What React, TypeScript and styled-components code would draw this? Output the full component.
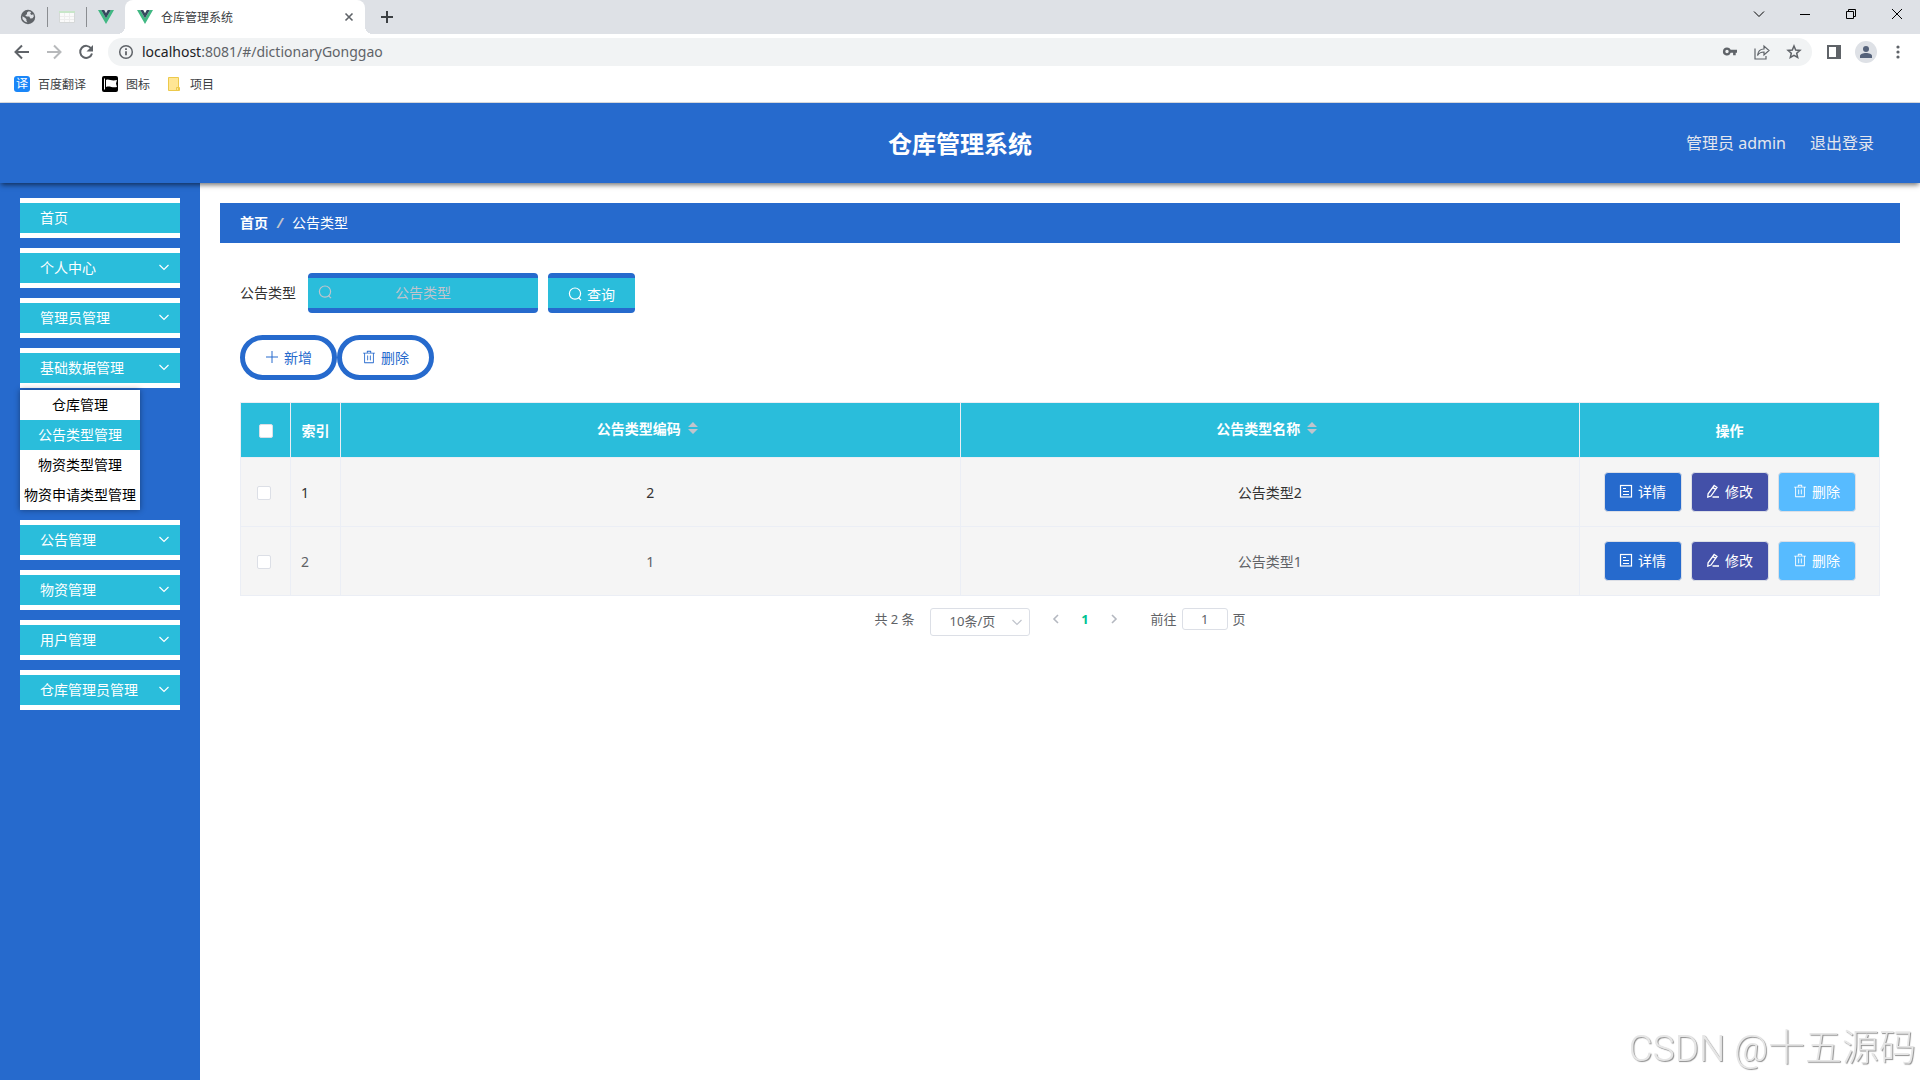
import React, { useState } from "react";
import styled, { createGlobalStyle, css } from "styled-components";

const BLUE = "#266acd";
const CYAN = "#2abddb";
const LINE = "#ebeef5";

const Global = createGlobalStyle`
  * { box-sizing: border-box; }
  body { margin: 0; background: #fff; }
  body, button, input, select {
    font-family: "Noto Sans", "Noto Sans CJK SC", sans-serif;
    font-size: 14px;
  }
  button { cursor: pointer; }
  svg { display: block; flex: none; }
`;

const Page = styled.div`
  display: flex;
  flex-direction: column;
  min-height: 100vh;
`;

/* ---------- browser chrome ---------- */

const TabStrip = styled.div`
  display: flex;
  height: 34px;
  padding-left: 9px;
  background: #dee1e6;
`;

const PinnedTab = styled.button<{ $divider?: boolean }>`
  display: flex;
  align-items: center;
  justify-content: center;
  width: ${(p) => (p.$divider ? 39 : 38)}px;
  height: 20px;
  margin-top: 7px;
  padding: 0;
  border: 0;
  border-right: ${(p) => (p.$divider ? "1px solid #8a8d91" : "0")};
  background: none;
`;

const ActiveTab = styled.div`
  position: relative;
  display: flex;
  align-items: center;
  gap: 8px;
  width: 240px;
  padding: 0 8px 0 12px;
  border-radius: 8px 8px 0 0;
  background: #fff;
  color: #3c4043;
  font-size: 12px;
  &::before,
  &::after {
    content: "";
    position: absolute;
    bottom: 0;
    width: 8px;
    height: 8px;
  }
  &::before {
    right: 100%;
    background: radial-gradient(circle at 0 0, transparent 8px, #fff 8px);
  }
  &::after {
    left: 100%;
    background: radial-gradient(circle at 100% 0, transparent 8px, #fff 8px);
  }
`;

const TabTitle = styled.span`
  flex: 1;
`;

const IconButton = styled.button<{ $width: number }>`
  display: flex;
  align-items: center;
  justify-content: center;
  width: ${(p) => p.$width}px;
  height: 28px;
  padding: 0;
  border: 0;
  background: none;
  color: #5f6368;
`;

const NewTab = styled(IconButton)`
  height: 34px;
  margin-left: 8px;
  color: #3c4043;
`;

const WindowButtons = styled.div`
  display: flex;
  margin-left: auto;
  & > button {
    color: #000;
  }
`;

const Toolbar = styled.div`
  display: flex;
  align-items: center;
  height: 36px;
  padding: 0 6px;
`;

const Omnibox = styled.div`
  display: flex;
  flex: 1;
  align-items: center;
  height: 28px;
  margin: 0 6px;
  padding: 0 2px 0 10px;
  border-radius: 14px;
  background: #f1f3f4;
  color: #5f6368;
`;

const Url = styled.span`
  flex: 1;
  margin-left: 8px;
  padding-bottom: 1px;
  font-family: "Noto Sans", sans-serif;
  font-size: 14px;
  b {
    color: #202124;
    font-weight: 400;
  }
`;

const Avatar = styled.span`
  display: flex;
  align-items: center;
  justify-content: center;
  width: 22px;
  height: 22px;
  border-radius: 50%;
  background: #dee1e6;
`;

const Bookmarks = styled.nav`
  display: flex;
  gap: 16px;
  height: 33px;
  padding: 0 14px 4px;
  border-bottom: 1px solid #dadce0;
`;

const Bookmark = styled.a`
  display: flex;
  align-items: center;
  gap: 8px;
  color: #3c4043;
  font-size: 12px;
  text-decoration: none;
`;

const TranslateBadge = styled.span`
  width: 16px;
  height: 16px;
  border-radius: 3px;
  background: #1a86f8;
  color: #fff;
  font-size: 12px;
  line-height: 16px;
  text-align: center;
`;

/* ---------- application ---------- */

const Header = styled.header`
  position: relative;
  z-index: 1;
  display: grid;
  grid-template-columns: 1fr auto 1fr;
  align-items: center;
  height: 80px;
  padding: 0 46px 2px;
  background: ${BLUE};
  box-shadow: 0 3px 5px -1px rgba(0, 0, 0, 0.55);
`;

const Title = styled.h1`
  grid-column: 2;
  margin: 0;
  color: #fff;
  font-size: 24px;
  font-weight: 700;
`;

const UserArea = styled.div`
  display: flex;
  justify-content: flex-end;
  gap: 24px;
  color: #e3e6ee;
  font-size: 16px;
`;

const LogoutLink = styled.a`
  color: inherit;
  text-decoration: none;
`;

const Body = styled.div`
  display: flex;
  flex: 1;
`;

const Sidebar = styled.nav`
  display: flex;
  flex: none;
  flex-direction: column;
  gap: 10px;
  width: 200px;
  padding: 15px 20px;
  background: ${BLUE};
`;

const MenuButton = styled.button`
  display: flex;
  align-items: center;
  justify-content: space-between;
  width: 100%;
  height: 40px;
  padding: 0 9px 2px 20px;
  border: solid #fff;
  border-width: 5px 0;
  background: ${CYAN};
  color: #fff;
`;

const SubMenuSlot = styled.div`
  margin-top: -10px;
`;

const SubMenu = styled.div`
  display: flex;
  flex-direction: column;
  width: 120px;
  margin-top: 2px;
  box-shadow: 0 0 6px rgba(0, 0, 0, 0.4);
`;

const SubLink = styled.a<{ $active: boolean }>`
  height: 30px;
  background: ${(p) => (p.$active ? CYAN : "#fff")};
  color: ${(p) => (p.$active ? "#fff" : "#000")};
  line-height: 30px;
  text-align: center;
  text-decoration: none;
  white-space: nowrap;
`;

const Main = styled.main`
  flex: 1;
  min-width: 0;
  padding: 20px;
`;

const Breadcrumb = styled.nav`
  display: flex;
  align-items: center;
  gap: 9px;
  height: 40px;
  padding: 0 20px 2px;
  background: ${BLUE};
  color: #fff;
  a {
    color: inherit;
    font-weight: 700;
    text-decoration: none;
  }
`;

const Separator = styled.span`
  color: #c0c4cc;
  font-style: italic;
  font-weight: 700;
`;

const Content = styled.div`
  display: flex;
  flex-direction: column;
  gap: 22px;
  padding: 30px 20px;
`;

const SearchForm = styled.form`
  display: flex;
  align-items: center;
  gap: 10px;
`;

const FieldLabel = styled.label`
  margin-right: 2px;
  padding-bottom: 2px;
  color: #333;
`;

const framed = css`
  height: 40px;
  border: solid ${BLUE};
  border-width: 5px 0;
  border-radius: 4px;
  background: ${CYAN};
`;

const SearchBox = styled.div`
  ${framed}
  display: flex;
  align-items: center;
  width: 230px;
  padding: 0 24px 2px 10px;
  color: #c0c4cc;
`;

const SearchInput = styled.input`
  flex: 1;
  min-width: 0;
  padding: 0;
  border: 0;
  outline: 0;
  background: none;
  color: #fff;
  text-align: center;
  &::placeholder {
    color: #c0c4cc;
  }
`;

const ActionButton = styled.button`
  display: flex;
  align-items: center;
  justify-content: center;
  gap: 5px;
`;

const QueryButton = styled(ActionButton)`
  ${framed}
  padding: 2px 20px 0;
  color: #fff;
`;

const PillButton = styled(ActionButton)`
  height: 45px;
  padding: 0 20px 2px;
  border: 5px solid ${BLUE};
  border-radius: 23px;
  background: #fff;
  color: ${BLUE};
`;

const RowButton = styled(ActionButton)<{ $color: string }>`
  width: 78px;
  height: 40px;
  padding: 0 0 2px;
  border: 1px solid #dcdfe6;
  border-radius: 4px;
  background: ${(p) => p.$color};
  color: #fff;
`;

const ButtonRow = styled.div`
  display: flex;
`;

const RowActions = styled.div`
  display: flex;
  justify-content: center;
  gap: 9px;
`;

const Table = styled.table`
  width: 100%;
  border: solid ${LINE};
  border-width: 1px 0 0 1px;
  border-spacing: 0;
  table-layout: fixed;
`;

const HeadCell = styled.th<{ $width?: number }>`
  width: ${(p) => (p.$width ? `${p.$width}px` : "auto")};
  height: 55px;
  padding: 0;
  border: solid ${LINE};
  border-width: 0 1px 1px 0;
  background: ${CYAN};
  color: #fff;
  font-weight: 700;
  text-align: center;
`;

const SortButton = styled.button`
  display: flex;
  align-items: center;
  justify-content: center;
  gap: 7px;
  width: 100%;
  height: 100%;
  padding: 0 6px 4px 0;
  border: 0;
  background: none;
  color: inherit;
  font-weight: 700;
`;

const Cell = styled.td<{ $left?: boolean }>`
  height: 69px;
  padding: 0 10px;
  border: solid ${LINE};
  border-width: 0 1px 1px 0;
  background: #f5f5f5;
  text-align: ${(p) => (p.$left ? "left" : "center")};
`;

const Row = styled.tr<{ $dark: boolean }>`
  color: ${(p) => (p.$dark ? "#333" : "#606266")};
`;

const Check = styled.input`
  display: block;
  width: 14px;
  height: 14px;
  margin: 2px 0 0 6px;
  border: 1px solid #dcdfe6;
  border-radius: 2px;
  appearance: none;
  background: #fff;
  &:checked {
    background: ${BLUE};
  }
`;

const HeadCheck = styled(Check)`
  margin-left: 18px;
`;

const Pager = styled.nav`
  display: flex;
  justify-content: center;
  margin-top: -10px;
  color: #606266;
  font-size: 13px;
  line-height: 22px;
`;

const SizeBox = styled.div`
  display: grid;
  align-items: center;
  margin: 0 12px 0 15px;
  & > * {
    grid-area: 1 / 1;
  }
  svg {
    justify-self: end;
    margin-right: 6px;
    color: #c0c4cc;
    pointer-events: none;
  }
`;

const SizeSelect = styled.select`
  width: 100px;
  height: 28px;
  padding: 0 25px 2px 19px;
  border: 1px solid #dcdfe6;
  border-radius: 3px;
  appearance: none;
  background: #fff;
  color: #606266;
  font-size: 13px;
`;

const PageButton = styled.button<{ $current?: boolean }>`
  display: flex;
  align-items: center;
  justify-content: center;
  width: 29px;
  height: 22px;
  padding: 0;
  border: 0;
  background: none;
  color: ${(p) => (p.$current ? "#00c292" : "#b4b8c0")};
  font-size: 13px;
  font-weight: 700;
`;

const Jump = styled.label`
  display: flex;
  gap: 5px;
  margin-left: 22px;
`;

const JumpInput = styled.input`
  width: 46px;
  height: 22px;
  padding: 0;
  border: 1px solid #dcdfe6;
  border-radius: 3px;
  color: #606266;
  font-size: 13px;
  text-align: center;
`;

const Watermark = styled.div`
  position: fixed;
  right: 4px;
  bottom: 6px;
  z-index: 2;
  color: #e6e6e6;
  font-family: Roboto, "Noto Sans CJK SC", sans-serif;
  font-size: 37px;
  font-weight: 300;
  line-height: 50px;
  pointer-events: none;
  text-shadow: 1px 1px 1px #8f8f8f;
`;

/* ---------- icons ---------- */

type Shape = { children: React.ReactNode; size?: number; box?: number; w?: number };
const Stroke = ({ children, size = 14, box = 14, w = 1 }: Shape) => (
  <svg width={size} height={size} viewBox={`0 0 ${box} ${box}`} fill="none" stroke="currentColor" strokeWidth={w} aria-hidden="true">
    {children}
  </svg>
);

const SearchIcon = () => (
  <Stroke w={1.2}>
    <circle cx="7" cy="6.6" r="5.6" />
    <path d="M10.4 10.6 13 13.2" />
  </Stroke>
);
const PlusIcon = () => <Stroke><path d="M7 1v12M1 7h12" /></Stroke>;
const TrashIcon = () => (
  <svg width="14" height="14" viewBox="0 0 1024 1024" fill="currentColor" aria-hidden="true">
    <path d="M160 256H96a32 32 0 0 1 0-64h256V95.936a32 32 0 0 1 32-32h256a32 32 0 0 1 32 32V192h256a32 32 0 1 1 0 64h-64v672a32 32 0 0 1-32 32H192a32 32 0 0 1-32-32V256zm448-64v-64H416v64h192zM224 896h576V256H224v640zm192-128a32 32 0 0 1-32-32V416a32 32 0 0 1 64 0v320a32 32 0 0 1-32 32zm192 0a32 32 0 0 1-32-32V416a32 32 0 0 1 64 0v320a32 32 0 0 1-32 32z" />
  </svg>
);
const DocIcon = () => (
  <Stroke w={1.2}>
    <rect x="1.5" y="1.5" width="11" height="11.5" />
    <path d="M4 4.5h3M4 7.5h6M4 10.5h6" />
  </Stroke>
);
const EditIcon = () => (
  <Stroke w={1.3}>
    <path d="M8.2 1.5 11 3.4 5 12 1.8 13l.3-3.2zM6.8 3.5l2.8 1.9M6.5 13H13" />
  </Stroke>
);
const ChevronDown = () => <Stroke w={1.2}><path d="M2.500 5 7 9.500 11.500 5" /></Stroke>;
const SortIcon = () => (
  <svg width="10" height="12" viewBox="0 0 10 12" fill="#c0c4cc" aria-hidden="true">
    <path d="M0 5 5 0l5 5zM0 7h10l-5 5z" />
  </svg>
);
const VueIcon = () => (
  <svg width="16" height="14" viewBox="0 0 16 14" aria-hidden="true">
    <path fill="#41b883" d="M0 0h3.2L8 8.300 12.800 0H16L8 14z" />
    <path fill="#35495e" d="M3.200 0h3L8 3.200 9.800 0h3L8 8.300z" />
  </svg>
);
const GlobeIcon = () => (
  <svg width="16" height="16" viewBox="0 0 16 16" aria-hidden="true">
    <circle cx="8" cy="8" r="7.200" fill="#5f6368" />
    <path fill="#dee1e6" d="M8.800 2.200 7 3.600v1.600L5.200 6.300l1.500 1.300h2.600l1 1.800 2.200-.2 1.300-1.600-.5-2.400-1.800.7-1.300-1.200 1-1.600zM2.400 7.300 5 8.800l1.400 1.400v1.600l1 1.700-2.700-1L2.500 10z" />
  </svg>
);
const SheetIcon = () => (
  <svg width="16" height="12" viewBox="0 0 16 12" aria-hidden="true">
    <path fill="#fafafa" stroke="#d5d8d8" d="M.5.5h15v11H.5z" />
    <path fill="#c8e6c9" d="M0 0h16v2H0z" />
    <path stroke="#ededed" d="M1 5.500h14M1 8.500h14M5.500 2v9M10.500 2v9" />
  </svg>
);

/* ---------- data ---------- */

const menuTop = ["首页", "个人中心", "管理员管理", "基础数据管理"];
const menuBottom = ["公告管理", "物资管理", "用户管理", "仓库管理员管理"];
const subItems = ["仓库管理", "公告类型管理", "物资类型管理", "物资申请类型管理"];
const rows = [
  { index: 1, code: 2, name: "公告类型2" },
  { index: 2, code: 1, name: "公告类型1" },
];

const MenuItem = ({ label }: { label: string }) => (
  <MenuButton type="button">
    {label}
    {label !== "首页" && <ChevronDown />}
  </MenuButton>
);

const BrowserBar = () => (
  <>
    <TabStrip>
      <PinnedTab $divider aria-label="Globe tab"><GlobeIcon /></PinnedTab>
      <PinnedTab $divider aria-label="Sheet tab"><SheetIcon /></PinnedTab>
      <PinnedTab aria-label="Vue tab"><VueIcon /></PinnedTab>
      <ActiveTab>
        <VueIcon />
        <TabTitle>仓库管理系统</TabTitle>
        <IconButton $width={16} aria-label="Close tab">
          <Stroke size={10} box={10} w={1.6}><path d="m1.500 1.500 7 7m0-7-7 7" /></Stroke>
        </IconButton>
      </ActiveTab>
      <NewTab $width={28} aria-label="New tab">
        <Stroke w={2}><path d="M7 1v12M1 7h12" /></Stroke>
      </NewTab>
      <WindowButtons>
        <IconButton $width={46} aria-label="Tab search">
          <Stroke size={12} box={12}><path d="m1 3.500 5 5 5-5" /></Stroke>
        </IconButton>
        <IconButton $width={46} aria-label="Minimize">
          <Stroke size={10} box={10}><path d="M0 5.500h10" /></Stroke>
        </IconButton>
        <IconButton $width={46} aria-label="Restore">
          <Stroke size={10} box={10}><path d="M.5 2.500h7v7h-7zM2.500 2.500v-2h7v7h-2" /></Stroke>
        </IconButton>
        <IconButton $width={46} aria-label="Close window">
          <Stroke size={10} box={10}><path d="m0 0 10 10M10 0 0 10" /></Stroke>
        </IconButton>
      </WindowButtons>
    </TabStrip>
    <Toolbar>
      <IconButton $width={32} aria-label="Back">
        <Stroke size={16} box={16} w={2}><path d="M15 8H2.500M8 1.500 1.500 8 8 14.500" /></Stroke>
      </IconButton>
      <IconButton $width={32} aria-label="Forward" disabled>
        <Stroke size={16} box={16} w={2}><path opacity=".45" d="M1 8h12.500M8 1.500 14.500 8 8 14.500" /></Stroke>
      </IconButton>
      <IconButton $width={32} aria-label="Reload">
        <svg width="16" height="16" viewBox="0 0 16 16" aria-hidden="true">
          <path fill="none" stroke="currentColor" strokeWidth="2" d="M13.200 4.500A6 6 0 1 0 14 9.500" />
          <path fill="currentColor" d="M15 1v6.500H8.500z" />
        </svg>
      </IconButton>
      <Omnibox>
        <Stroke size={16} box={16} w={1.5}>
          <circle cx="8" cy="8" r="6.300" />
          <path strokeWidth="1.800" d="M8 7.200v4M8 4.200v1.700" />
        </Stroke>
        <Url><b>localhost</b>:8081/#/dictionaryGonggao</Url>
        <IconButton $width={32} aria-label="Passwords">
          <svg width="16" height="16" viewBox="0 0 16 16" aria-hidden="true">
            <path fill="currentColor" fillRule="evenodd" d="M5 3.500a4 4 0 0 1 3.700 2.300H15v3h-1.300v2.400h-2.600V8.800H8.700A4 4 0 1 1 5 3.500m0 2.300a1.700 1.700 0 1 0 0 3.400 1.700 1.700 0 0 0 0-3.400" />
          </svg>
        </IconButton>
        <IconButton $width={32} aria-label="Share">
          <Stroke size={16} box={16} w={1.2}>
            <path d="M1 4.500v10.500h11v-3M3.500 11.500C4 7 6.500 5 10 5V2l5 4.500-5 4.500V8c-3 0-5 .8-6.500 3.500z" />
          </Stroke>
        </IconButton>
        <IconButton $width={32} aria-label="Bookmark">
          <Stroke size={16} box={16} w={1.5}>
            <path d="m8 2 1.700 4 4.300.4-3.300 2.900 1 4.200L8 11.300l-3.700 2.200 1-4.200L2 6.400 6.300 6z" />
          </Stroke>
        </IconButton>
      </Omnibox>
      <IconButton $width={32} aria-label="Side panel">
        <svg width="14" height="14" viewBox="0 0 14 14" aria-hidden="true">
          <path fill="currentColor" fillRule="evenodd" d="M0 0h14v14H0zM2 2v10h7V2z" />
        </svg>
      </IconButton>
      <IconButton $width={32} aria-label="Profile">
        <Avatar>
          <svg width="12" height="12" viewBox="0 0 12 12" fill="#55627a" aria-hidden="true">
            <circle cx="6" cy="3" r="3" />
            <path d="M0 12v-2c0-2 3-3 6-3s6 1 6 3v2z" />
          </svg>
        </Avatar>
      </IconButton>
      <IconButton $width={32} aria-label="Menu">
        <svg width="4" height="14" viewBox="0 0 4 14" fill="currentColor" aria-hidden="true">
          <circle cx="2" cy="2" r="1.600" /><circle cx="2" cy="7" r="1.600" /><circle cx="2" cy="12" r="1.600" />
        </svg>
      </IconButton>
    </Toolbar>
    <Bookmarks>
      <Bookmark href="#translate"><TranslateBadge>译</TranslateBadge>百度翻译</Bookmark>
      <Bookmark href="#icons">
        <svg width="16" height="16" viewBox="0 0 16 16" aria-hidden="true">
          <rect width="16" height="16" rx="2" />
          <path stroke="#fff" d="M2.500 2.500v11" />
          <path fill="#fff" d="M4 4c3-1.500 5 1.500 11 0l-1 3.500 1 3.500c-5 1.200-7-1.500-11 0z" />
        </svg>
        图标
      </Bookmark>
      <Bookmark href="#projects">
        <svg width="16" height="16" viewBox="0 0 16 16" aria-hidden="true">
          <path fill="#ffe694" stroke="#ecc94b" d="M2.500 1.500h10v13h-10zM10.500 11.500h3v3h-3z" />
        </svg>
        项目
      </Bookmark>
    </Bookmarks>
  </>
);

export default function App() {
  const [picked, setPicked] = useState<number[]>([]);
  const all = picked.length === rows.length;
  const toggle = (n: number) =>
    setPicked((p) => (p.includes(n) ? p.filter((x) => x !== n) : [...p, n]));

  return (
    <Page>
      <Global />
      <BrowserBar />
      <Header>
        <Title>仓库管理系统</Title>
        <UserArea>
          <span>管理员 admin</span>
          <LogoutLink href="#logout">退出登录</LogoutLink>
        </UserArea>
      </Header>
      <Body>
        <Sidebar>
          {menuTop.map((m) => <MenuItem key={m} label={m} />)}
          <SubMenuSlot>
            <SubMenu>
              {subItems.map((s) => (
                <SubLink key={s} href="#dictionary" $active={s === "公告类型管理"}>{s}</SubLink>
              ))}
            </SubMenu>
          </SubMenuSlot>
          {menuBottom.map((m) => <MenuItem key={m} label={m} />)}
        </Sidebar>
        <Main>
          <Breadcrumb>
            <a href="#home">首页</a>
            <Separator>/</Separator>
            <span>公告类型</span>
          </Breadcrumb>
          <Content>
            <SearchForm onSubmit={(e) => e.preventDefault()}>
              <FieldLabel htmlFor="type">公告类型</FieldLabel>
              <SearchBox>
                <SearchIcon />
                <SearchInput id="type" placeholder="公告类型" />
              </SearchBox>
              <QueryButton type="submit"><SearchIcon />查询</QueryButton>
            </SearchForm>
            <ButtonRow>
              <PillButton type="button"><PlusIcon />新增</PillButton>
              <PillButton type="button"><TrashIcon />删除</PillButton>
            </ButtonRow>
            <Table>
              <thead>
                <tr>
                  <HeadCell $width={50}>
                    <HeadCheck
                      type="checkbox"
                      aria-label="全选"
                      checked={all}
                      onChange={() => setPicked(all ? [] : rows.map((r) => r.index))}
                    />
                  </HeadCell>
                  <HeadCell $width={50}>索引</HeadCell>
                  <HeadCell><SortButton type="button">公告类型编码<SortIcon /></SortButton></HeadCell>
                  <HeadCell><SortButton type="button">公告类型名称<SortIcon /></SortButton></HeadCell>
                  <HeadCell $width={300}>操作</HeadCell>
                </tr>
              </thead>
              <tbody>
                {rows.map((r) => (
                  <Row key={r.index} $dark={r.index === 1}>
                    <Cell>
                      <Check
                        type="checkbox"
                        aria-label={`选择 ${r.index}`}
                        checked={picked.includes(r.index)}
                        onChange={() => toggle(r.index)}
                      />
                    </Cell>
                    <Cell $left>{r.index}</Cell>
                    <Cell>{r.code}</Cell>
                    <Cell>{r.name}</Cell>
                    <Cell>
                      <RowActions>
                        <RowButton type="button" $color={BLUE}><DocIcon />详情</RowButton>
                        <RowButton type="button" $color="#4350a8"><EditIcon />修改</RowButton>
                        <RowButton type="button" $color="#57bbff"><TrashIcon />删除</RowButton>
                      </RowActions>
                    </Cell>
                  </Row>
                ))}
              </tbody>
            </Table>
            <Pager>
              <span>共 2 条</span>
              <SizeBox>
                <SizeSelect aria-label="每页条数" defaultValue="10">
                  <option value="10">10条/页</option>
                  <option value="20">20条/页</option>
                </SizeSelect>
                <ChevronDown />
              </SizeBox>
              <PageButton type="button" aria-label="上一页">
                <Stroke size={12} box={12} w={1.6}><path d="M8 2 4 6l4 4" /></Stroke>
              </PageButton>
              <PageButton type="button" $current>1</PageButton>
              <PageButton type="button" aria-label="下一页">
                <Stroke size={12} box={12} w={1.6}><path d="m4 2 4 4-4 4" /></Stroke>
              </PageButton>
              <Jump>
                前往
                <JumpInput defaultValue="1" />
                页
              </Jump>
            </Pager>
          </Content>
        </Main>
      </Body>
      <Watermark>CSDN @十五源码</Watermark>
    </Page>
  );
}
